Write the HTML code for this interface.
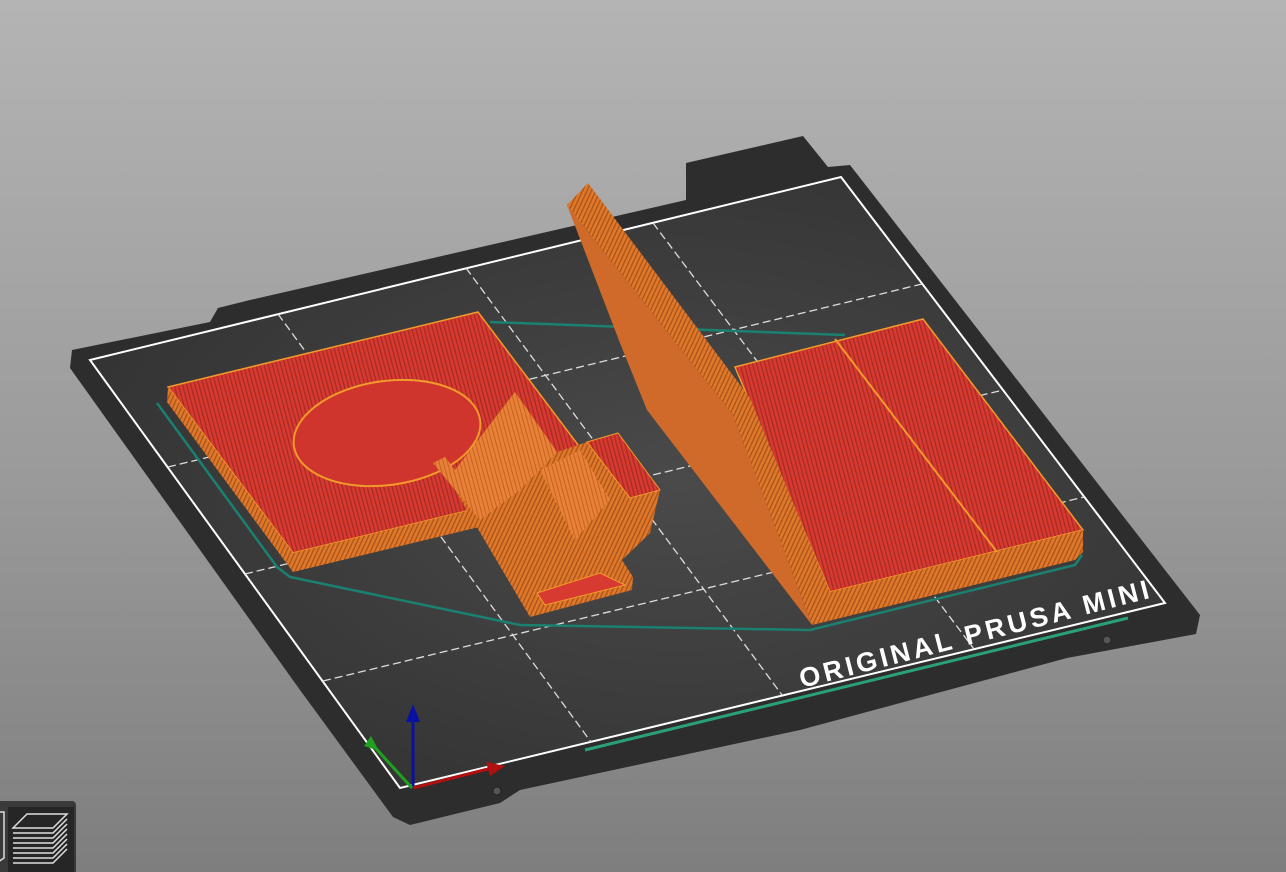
<!DOCTYPE html>
<html><head><meta charset="utf-8"><style>
html,body{margin:0;padding:0;width:1286px;height:872px;overflow:hidden;background:linear-gradient(#b4b4b4,#9a9a9a 55%,#7e7e7e);}
svg{position:absolute;left:0;top:0}
</style></head><body>
<svg width="1286" height="872" viewBox="0 0 1286 872" xmlns="http://www.w3.org/2000/svg">
<defs>
<pattern id="rs" width="4" height="4" patternUnits="userSpaceOnUse" patternTransform="rotate(-15)"><rect width="4" height="4" fill="#d63a30"/><rect width="1.3" height="4" fill="#a82a24"/></pattern>
<pattern id="os" width="4" height="4" patternUnits="userSpaceOnUse" patternTransform="rotate(25)"><rect width="4" height="4" fill="#e0782c"/><rect width="1.3" height="4" fill="#a85418"/></pattern>
<pattern id="ol" width="4" height="4" patternUnits="userSpaceOnUse" patternTransform="rotate(-15)"><rect width="4" height="4" fill="#e8823a"/><rect width="1" height="4" fill="#c8621c"/></pattern>
<radialGradient id="bg" cx="0.55" cy="0.5" r="0.6"><stop offset="0" stop-color="#4a4a4a"/><stop offset="1" stop-color="#333"/></radialGradient>
</defs>
<path d="M72,350 L210,322 L218,308 L250,300 L686,200 L686,163 L803,136 L828,167 L850,165 L1200,615 L1196,634 L1110,650 L1067,658 L800,730 L520,790 L500,803 L410,825 L393,817 L300,690 L70,368 Z" fill="#2d2d2d"/>
<path d="M90,360 L841,177 L1165,603 L400,788 Z" fill="url(#bg)" stroke="#fff" stroke-width="2"/>
<g stroke="#ddd" stroke-width="1.3" stroke-dasharray="8,4" fill="none">
<path d="M278,314 L591,742"/><path d="M466,268 L782,695"/><path d="M653,223 L974,649"/>
<path d="M168,467 L922,284"/><path d="M245,574 L1003,390"/><path d="M323,681 L1084,497"/>
</g>
<path d="M157,403 L277,567 L290,577 L520,625 L810,630 L1075,565 L1082,555 M490,322 L845,335" fill="none" stroke="#1a8070" stroke-width="2.5"/>
<path d="M168,387 L478,312 L603,478 L293,553 Z" fill="url(#rs)" stroke="#f29a2a" stroke-width="1.5"/>
<path d="M168,387 L293,553 L293,572 L167,402 Z" fill="url(#os)"/>
<path d="M293,553 L603,478 L603,497 L293,572 Z" fill="url(#os)"/>
<ellipse cx="387" cy="433" rx="94" ry="52" transform="rotate(-8 387 433)" fill="#d0352d" stroke="#f29a2a" stroke-width="2"/>
<path d="M433,463 L445,457 L455,470 L515,392 L557,452 L587,442 L618,433 L660,490 L650,533 L622,560 L633,577 L632,590 L530,617 L455,490 Z" fill="url(#os)"/>
<path d="M433,463 L445,457 L455,470 L515,392 L557,452 L520,490 L480,520 Z" fill="url(#ol)"/>
<path d="M540,470 L580,450 L610,500 L575,540 Z" fill="url(#ol)"/>
<path d="M587,442 L618,433 L660,490 L630,498 Z" fill="url(#rs)" stroke="#f29a2a"/>
<path d="M537,593 L600,573 L625,585 L545,605 Z" fill="#d63a30" stroke="#f29a2a"/>
<path d="M735,367 L923,319 L1083,530 L830,592 Z" fill="url(#rs)" stroke="#f29a2a" stroke-width="1.5"/>
<path d="M830,592 L1083,530 L1083,552 L1075,560 L812,625 Z" fill="url(#os)"/>
<path d="M835,339 L997,552" stroke="#f29a2a" stroke-width="2"/>
<path d="M733,415 L750,398 L830,592 L812,625 Z" fill="url(#os)"/>
<path d="M567,205 L733,415 L812,625 L647,410 L620,343 Z" fill="#cf6a2a"/>
<path d="M567,205 L588,183 L750,398 L733,415 Z" fill="url(#os)"/>
<text x="0" y="0" transform="translate(802,688) rotate(-14.5)" font-family="Liberation Sans, sans-serif" font-weight="bold" font-size="27" fill="#fff" letter-spacing="3.5">ORIGINAL PRUSA MINI</text>
<path d="M585,750 L1128,618" stroke="#2aa07a" stroke-width="3"/>
<circle cx="1107" cy="640" r="4" fill="#555" stroke="#222"/>
<circle cx="497" cy="791" r="4" fill="#555" stroke="#222"/>
<path d="M413,788 L413,720" stroke="#0a10a0" stroke-width="3"/><path d="M406,722 L413,704 L420,722 Z" fill="#0a10a0"/>
<path d="M413,788 L488,769" stroke="#b01010" stroke-width="3"/><path d="M486,762 L505,766 L490,776 Z" fill="#b01010"/>
<path d="M412,788 L370,742" stroke="#20a020" stroke-width="3"/><path d="M364,746 L371,736 L379,751 Z" fill="#20a020"/>
<rect x="-5" y="801" width="81" height="75" rx="4" fill="#3a3a3a"/>
<rect x="8" y="807" width="66" height="65" fill="#262626"/>
<g stroke="#ddd" stroke-width="1.5" fill="none">
<path d="M13,828 L27,814 L67,814 L53,828 Z"/>
<path d="M13,833 L53,833 L67,819 M13,838 L53,838 L67,824 M13,843 L53,843 L67,829 M13,848 L53,848 L67,834 M13,853 L53,853 L67,839 M13,858 L53,858 L67,844 M13,863 L53,863 L67,849"/>
<path d="M-2,812 L4,812 L4,858 L-2,862"/>
</g>
</svg>
</body></html>
